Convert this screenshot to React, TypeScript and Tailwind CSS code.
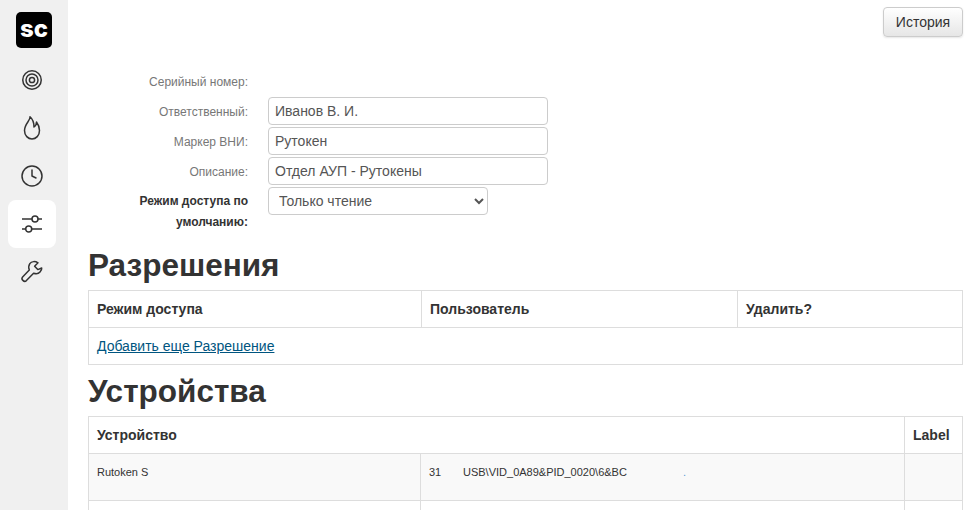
import { Clock } from "lucide-react";

function TargetIcon() {
  return (
    <svg width="22" height="22" viewBox="0 0 22 22" fill="none" stroke="#333" strokeWidth="1.5">
      <circle cx="11" cy="11" r="9.25" />
      <circle cx="11" cy="11" r="6" />
      <circle cx="11" cy="11" r="2.6" />
    </svg>
  );
}

function FlameIcon() {
  return (
    <svg width="24" height="24" viewBox="0 0 24 24" fill="none" stroke="#333" strokeWidth="1.5" strokeLinejoin="round">
      <path d="M10 .8C10.5 4.5 4.5 8 4.5 14.5 4.5 19.5 8 23 12 23s7.500-3.500 7.500-8.500c0-3.500-1.500-6.500-3-8.500 0 2.500-1 4-2.500 5 0-4-1.500-8-4-10.200Z" />
    </svg>
  );
}

function SlidersIcon() {
  return (
    <svg width="22" height="22" viewBox="0 0 22 22" fill="none" stroke="#333" strokeWidth="1.5">
      <path d="M1 6h10M17 6h4M1 16h3.700M10.700 16H21" />
      <circle cx="14" cy="6" r="3" />
      <circle cx="7.700" cy="16" r="3" />
    </svg>
  );
}

function WrenchIcon() {
  return (
    <svg width="24" height="24" viewBox="0 0 24 24" fill="none" stroke="#333" strokeWidth="1.5" strokeLinejoin="round">
      <path d="M18 2.800C15.500 1.200 11.500 1 9.800 3.600 8.600 5.500 8.500 8 9.300 10L2.600 17C1.600 18.200 2 19.600 2.900 20.400 3.900 21.400 5.300 21.600 6.400 20.600L13.600 13.200C15.800 14 18.500 13.800 20 12 21.400 10.500 21.900 9.500 21.700 8L17.800 9.600 14.600 6.200Z" />
    </svg>
  );
}

const fields = [
  { label: "Ответственный:", value: "Иванов В. И." },
  { label: "Маркер ВНИ:", value: "Рутокен" },
  { label: "Описание:", value: "Отдел АУП - Рутокены" },
];

const cellBorder = "border border-[#ddd]";

export default function App() {
  return (
    <div className="flex h-[510px] w-[970px] overflow-hidden bg-white font-['Liberation_Sans',Arial,sans-serif] text-[#333]">
      <nav className="flex w-[68px] shrink-0 flex-col items-start bg-[#f0f0f0] pt-3 pl-2">
        <div className="ml-2 flex h-9 w-9 items-center justify-center rounded-[5px] bg-black pb-[2px] font-['Inter',sans-serif] text-[24px] leading-none font-extrabold tracking-[0px] text-white">
          sc
        </div>
        <div className="mt-2 flex h-12 w-12 items-center justify-center">
          <TargetIcon />
        </div>
        <div className="flex h-12 w-12 items-center justify-center">
          <FlameIcon />
        </div>
        <div className="flex h-12 w-12 items-center justify-center">
          <Clock size={24} strokeWidth={1.5} color="#333" />
        </div>
        <div className="flex h-12 w-12 items-center justify-center rounded-lg bg-white">
          <SlidersIcon />
        </div>
        <div className="flex h-12 w-12 items-center justify-center">
          <WrenchIcon />
        </div>
      </nav>

      <main className="min-w-0 flex-1 pl-5">
        <div className="flex h-[72px] w-[875px] justify-end pt-[7px]">
          <button className="h-[30px] w-20 rounded-[4px] border border-[#ccc] bg-gradient-to-b from-white to-[#e6e6e6] text-sm text-[#333] shadow-[0_1px_2px_rgba(0,0,0,0.1)]">
            История
          </button>
        </div>

        <div className="flex h-5 items-center">
          <div className="w-40 text-right text-xs text-[#777]">Серийный номер:</div>
        </div>
        <div className="mt-[5px] flex flex-col gap-[2px]">
          {fields.map((field) => (
            <div key={field.label} className="flex h-7 items-center gap-5">
              <div className="w-40 pt-[2px] text-right text-xs text-[#777]">{field.label}</div>
              <input
                readOnly
                value={field.value}
                className="h-7 w-[280px] rounded-[4px] border border-[#ccc] px-[6px] text-sm text-[#555] outline-none"
              />
            </div>
          ))}
          <div className="flex gap-5">
            <div className="w-40 pt-1 text-right text-xs leading-[21px] font-bold text-[#333]">
              Режим доступа по умолчанию:
            </div>
            <select className="h-7 w-[220px] rounded-[4px] border border-[#ccc] bg-white px-[6px] text-sm text-[#555] outline-none">
              <option>Только чтение</option>
            </select>
          </div>
        </div>

        <h2 className="mt-[15px] text-[31.5px] leading-[35px] font-bold text-[#333]">Разрешения</h2>
        <table className="mt-[7px] w-[875px] table-fixed border-collapse text-sm">
          <colgroup>
            <col className="w-[333px]" />
            <col className="w-[316px]" />
            <col />
          </colgroup>
          <thead>
            <tr className="h-[37px]">
              <th className={`${cellBorder} px-2 text-left font-bold`}>Режим доступа</th>
              <th className={`${cellBorder} px-2 text-left font-bold`}>Пользователь</th>
              <th className={`${cellBorder} px-2 text-left font-bold`}>Удалить?</th>
            </tr>
          </thead>
          <tbody>
            <tr className="h-[37px]">
              <td colSpan={3} className={`${cellBorder} px-2`}>
                <a href="#" className="text-[#005580] underline">
                  Добавить еще Разрешение
                </a>
              </td>
            </tr>
          </tbody>
        </table>

        <h2 className="mt-[9px] text-[31.5px] leading-[35px] font-bold text-[#333]">Устройства</h2>
        <table className="mt-[7px] w-[875px] table-fixed border-collapse text-sm">
          <colgroup>
            <col className="w-[332px]" />
            <col />
            <col className="w-[58px]" />
          </colgroup>
          <thead>
            <tr className="h-[37px]">
              <th colSpan={2} className={`${cellBorder} px-2 text-left font-bold`}>
                Устройство
              </th>
              <th className={`${cellBorder} px-2 text-left font-bold`}>Label</th>
            </tr>
          </thead>
          <tbody className="text-[11px]">
            <tr className="h-[47px] bg-[#f9f9f9]">
              <td className={`${cellBorder} px-2 pt-[11px] align-top`}>Rutoken S</td>
              <td className={`${cellBorder} px-2 pt-[11px] align-top`}>
                <div className="flex">
                  <span className="w-[34px]">31</span>
                  <span>USB\VID_0A89&amp;PID_0020\6&amp;BC</span>
                  <span className="ml-[56px] text-[#5b9bd5]">.</span>
                </div>
              </td>
              <td className={cellBorder}></td>
            </tr>
            <tr className="h-[47px]">
              <td className={cellBorder}></td>
              <td className={cellBorder}></td>
              <td className={cellBorder}></td>
            </tr>
          </tbody>
        </table>
      </main>
    </div>
  );
}
